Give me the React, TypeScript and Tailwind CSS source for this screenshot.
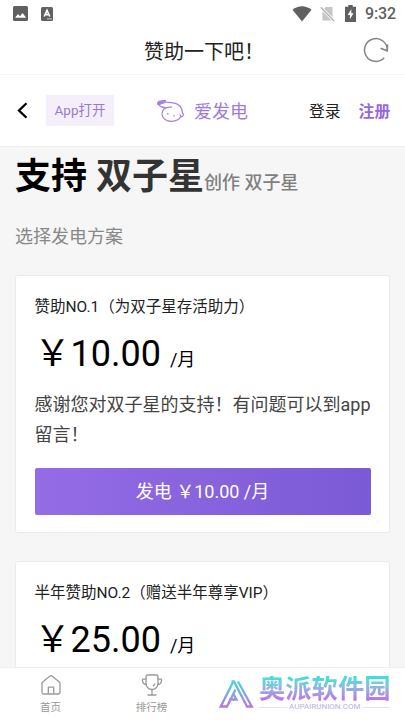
const plans = [
    {
        title: "赞助NO.1（为双子星存活助力）",
        price: "10.00",
        description: "感谢您对双子星的支持！有问题可以到app留言！",
    },
    {
        title: "半年赞助NO.2（赠送半年尊享VIP）",
        price: "25.00",
    },
];

function StatusBar() {
    return (
        <div className="flex h-[27px] shrink-0 items-center justify-between pl-[13px] pr-[9px] text-[#606060]">
            <div className="flex items-center gap-[13px]">
                <svg className="h-[15px] w-[15px]" viewBox="0 0 15 15">
                    <rect width="15" height="15" rx="1.5" fill="currentColor" />
                    <path d="M2 11.8 5 8l2 2.3L9.5 7l3.7 4.8z" fill="#fff" />
                </svg>
                <svg className="h-[14px] w-3" viewBox="0 0 12 14">
                    <rect width="12" height="14" rx="1.5" fill="currentColor" />
                    <path d="M3.2 9.5 6 3.2l2.8 6.3M4.2 7.6h3.6" fill="none" stroke="#fff" strokeWidth="1.6" />
                    <path d="M6 11.9h5" stroke="#ddd" strokeWidth=".8" />
                </svg>
            </div>
            <div className="flex items-center">
                <svg className="mr-[8px] h-[16px] w-[20px]" viewBox="0 0 20 16">
                    <path d="M.5 3.8C6-.9 14-.9 19.500 3.800L10 15.500z" fill="currentColor" />
                </svg>
                <svg className="mr-[10px] h-[16px] w-[15px]" viewBox="0 0 15 16">
                    <path d="M2.500 4.500 5.500 1H12.500V14.500H2.500z" fill="#c6c6c6" />
                    <path d="M.8 1.200 14 15" stroke="#fff" strokeWidth="3" />
                    <path d="M.8 1.200 14 15" stroke="#b0b0b0" strokeWidth="1.300" />
                </svg>
                <svg className="mr-[9px] h-[17px] w-[11px]" viewBox="0 0 11 17">
                    <path d="M3.300 0h4.400v1.700H11V17H0V1.700h3.300z" fill="currentColor" />
                    <path d="M6.300 4 2.700 10h2.200v4.300L8.500 8.300H6.300z" fill="#fff" />
                </svg>
                <span className="pt-px text-[16px] font-medium leading-none tracking-[-0.1px]">9:32</span>
            </div>
        </div>
    );
}

function TitleBar() {
    return (
        <header className="flex h-12 shrink-0 items-center justify-end border-b border-[#f5f5f5] pr-[16px]">
            <h1 className="mr-[99px] pt-[2px] text-[20px] leading-6 text-[#222]">赞助一下吧！</h1>
            <svg className="mb-px h-[26px] w-[26px]" viewBox="0 0 26 26" fill="none" stroke="#858585" strokeWidth="1.500">
                <path d="M21.200 20.800A11.400 11.400 0 1 1 24.300 13.200" />
                <path d="M17.600 11.200 24.300 13.800 24.600 7.500" />
            </svg>
        </header>
    );
}

function NavBar() {
    return (
        <nav className="flex h-[72px] shrink-0 items-center border-b border-[#f1f1f1] bg-white pl-[17px]">
            <svg className="h-[17px] w-[11px]" viewBox="0 0 11 17" fill="none" stroke="#000" strokeWidth="2.300">
                <path d="M9.500 1.200 2 8.500l7.500 7.300" />
            </svg>
            <button className="ml-[18px] h-[31px] w-[68px] bg-[#f4effb] pb-px text-[13.5px] leading-5 text-[#9c78d2]">App打开</button>
            <div className="ml-[42px] flex items-center">
                <svg className="h-[24px] w-[30px]" viewBox="0 0 30 24" fill="none" stroke="#a582dd" strokeWidth="1.200" strokeLinecap="round" strokeLinejoin="round">
                    <path d="M2 5.300C1 3.800 2.700 2.200 4.500 2.200 6.300 2.200 7.800 1.400 9.500 1.600 8.800 2.300 8.800 3 10 3.200L17.500 3.900C23 5 26.300 9 26.500 14 28 14.300 27.500 18.100 25.200 17.600 22.500 21.500 17 23.200 12 21.800 7 20.400 5 16.300 6.500 12.300 7.200 10.400 8.600 9.300 10.500 8.600 7.500 9 4.200 7.500 2 5.300z" />
                    <path d="M2 5.300C1.300 3.800 3 2.400 4.800 2.400L8.500 1.900 8.300 3.600 4 5.300z" fill="#a582dd" />
                    <path d="M10.500 8.600 15.500 7.900M24 15.800q.3 1.200 1.200 1.800" />
                    <path d="M11.800 14.500v.5M18 16.700v.3" strokeWidth="1.500" />
                </svg>
                <span className="ml-[8px] pt-[2px] text-[18px] leading-6 text-[#a07bda]">爱发电</span>
            </div>
            <div className="ml-[61px] flex gap-[18px] pt-[2px] text-[15.8px] leading-6">
                <span className="text-[#222]">登录</span>
                <span className="font-bold text-[#9467df]">注册</span>
            </div>
        </nav>
    );
}

function PlanCard({ plan }: { plan: (typeof plans)[number] }) {
    return (
        <article className="h-[258px] shrink-0 rounded-[3px] border border-[#ebebeb] bg-white px-[18.5px] pt-[20px]">
            <h3 className="text-[15.5px] leading-[22px] text-[#222]">{plan.title}</h3>
            <p className="mt-[9px] whitespace-pre text-[36px] leading-[54px] text-black">
                ￥{plan.price} <span className="text-[18px]">/月</span>
            </p>
            {plan.description && (
                <>
                    <p className="mt-[3px] -mr-1 h-[60px] text-[18px] leading-[30px] text-[#444]">{plan.description}</p>
                    <button className="mt-[18px] h-[47px] w-full rounded-[2px] bg-linear-to-r from-[#946ce6] to-[#7b5ad5] text-[18px] leading-6 text-white">
                        发电 ￥{plan.price} /月
                    </button>
                </>
            )}
        </article>
    );
}

function TabBar() {
    return (
        <footer className="flex h-[53px] shrink-0 border-t border-[#f0f0f0] bg-white text-[10.5px] leading-4 text-[#999]">
            <div className="flex w-[101px] flex-col items-center pt-[7px]">
                <svg className="h-[20px] w-[20px]" viewBox="0 0 20 20" fill="none" stroke="currentColor" strokeWidth="1.300" strokeLinejoin="round">
                    <path d="M1 8.300Q1 7.500 1.700 6.900L8.700 1.200Q10 .3 11.300 1.200L18.300 6.900Q19 7.500 19 8.300V17Q19 19 17 19H3Q1 19 1 17z" />
                    <path d="M7.300 18.500V12.200h5.400V18.500" />
                </svg>
                <span className="mt-[5px]">首页</span>
            </div>
            <div className="flex w-[101px] flex-col items-center pt-[6px]">
                <svg className="h-[22px] w-[22px]" viewBox="0 0 22 22" fill="none" stroke="currentColor" strokeWidth="1.300" strokeLinecap="round" strokeLinejoin="round">
                    <path d="M5 2.500Q5 1 6.500 1h9Q17 1 17 2.500v7a6 6 0 0 1-12 0zM11 15.500V21M7 21h8" />
                    <path d="M5 5.200H1.500Q1 10.300 5.500 10.500M17 5.200h3.500q.5 5.100-4 5.300M13.800 9.800q-.3 1.300-1.300 1.800" />
                </svg>
                <span className="mt-[4px]">排行榜</span>
            </div>
            <div className="ml-[17px] flex pt-[8px]">
                <svg className="mt-[4px] h-[28px] w-[35px]" viewBox="0 0 35 28" fill="none" stroke="url(#brand)" strokeWidth="2.300">
                    <defs>
                        <linearGradient id="brand" x1="0" y1="0" x2="0" y2="28" gradientUnits="userSpaceOnUse">
                            <stop stopColor="#44dcda" />
                            <stop offset="1" stopColor="#b873e5" />
                        </linearGradient>
                    </defs>
                    <path d="M14.300 1.500 1.800 26.500H8L16.500 9.500M12.500 1.500H15L28 26.500M19 1.500 32.800 26.500H27M10 19.500H17.500L14.500 14" />
                </svg>
                <div className="ml-[5px] flex flex-col items-center">
                    <span className="bg-linear-to-b from-[#43dddd] from-10% to-[#bc6fe5] to-95% bg-clip-text text-[26.3px] font-bold leading-[26px] text-transparent">奥派软件园</span>
                    <div className="flex w-[131px] items-center gap-[2px]">
                        <i className="h-px flex-1 bg-[#e9dff6]" />
                        <span className="whitespace-nowrap text-[8px] leading-[10px] text-[#b7b2e8]">AUPAIRUNION.COM</span>
                        <i className="h-px flex-1 bg-[#e9dff6]" />
                    </div>
                </div>
            </div>
        </footer>
    );
}

export default function App() {
    return (
        <div className="flex h-[720px] w-[405px] flex-col overflow-hidden bg-white font-[Roboto,'Noto_Sans_CJK_SC',sans-serif]">
            <StatusBar />
            <TitleBar />
            <NavBar />
            <main className="flex min-h-0 flex-1 flex-col overflow-hidden bg-[#f6f6f6] px-[15px]">
                <h2 className="whitespace-pre pt-[3px] text-[36px] font-bold leading-[54px] text-black">
                    支持 <span className="text-[#333]">双子星</span><span className="text-[18px] font-medium text-[#808080]">创作 双子星</span>
                </h2>
                <p className="mt-[12px] text-[18px] leading-[30px] text-[#888]">选择发电方案</p>
                <div className="mt-[23px] flex flex-col gap-[28px]">
                    {plans.map((plan) => (
                        <PlanCard key={plan.title} plan={plan} />
                    ))}
                </div>
            </main>
            <TabBar />
        </div>
    );
}
